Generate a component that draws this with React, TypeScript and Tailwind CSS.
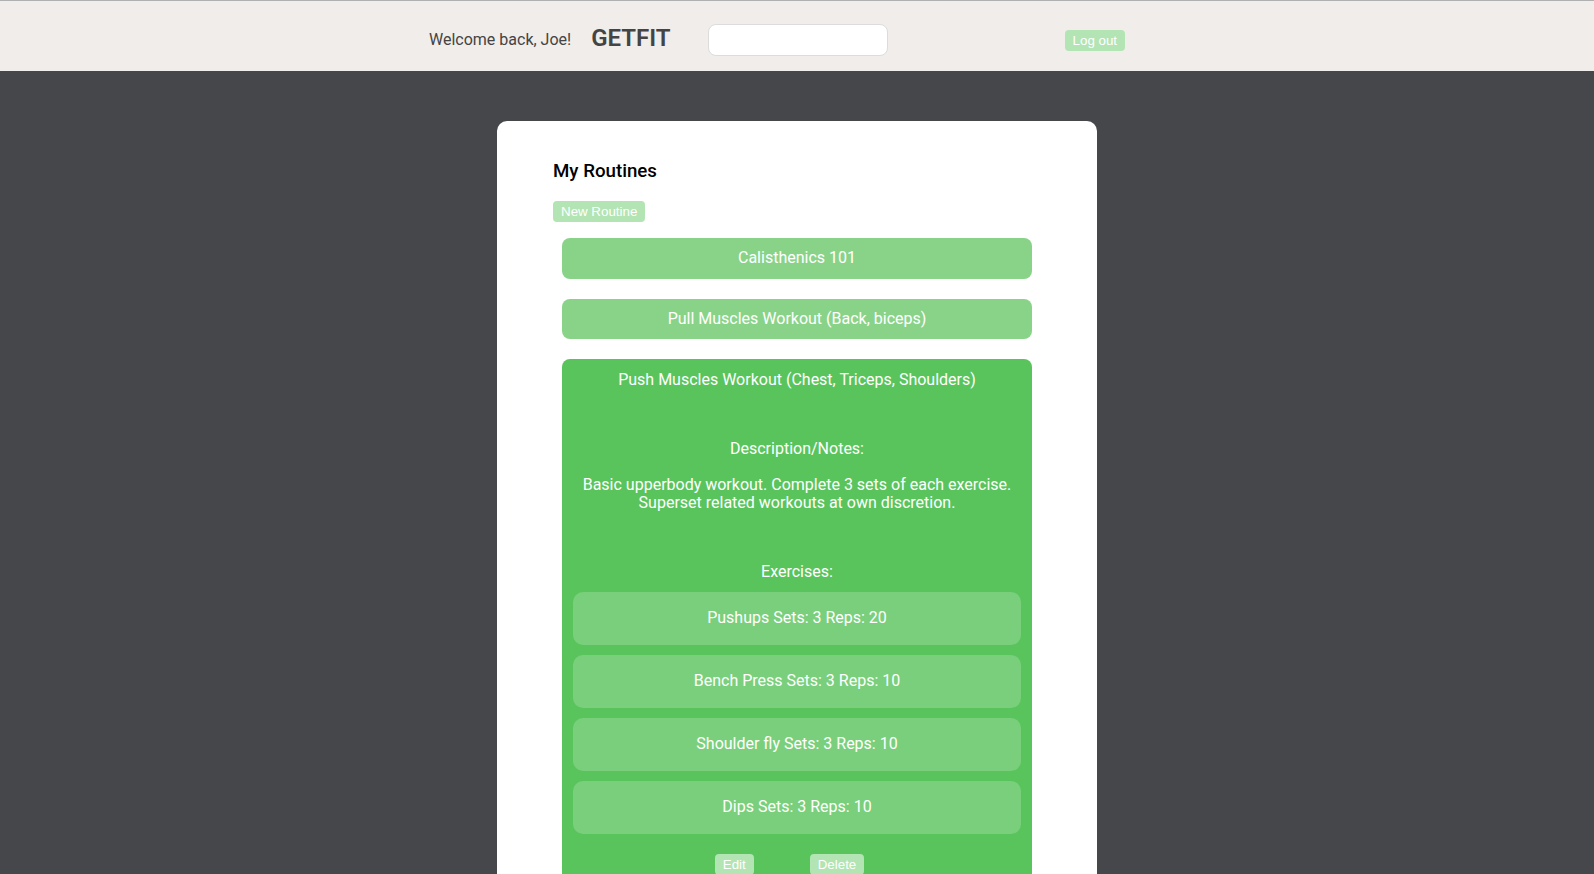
import React from "react"

const exercises = [
  "Pushups Sets: 3 Reps: 20",
  "Bench Press Sets: 3 Reps: 10",
  "Shoulder fly Sets: 3 Reps: 10",
  "Dips Sets: 3 Reps: 10",
]

function SmallButton({ children }: { children: React.ReactNode }) {
  return (
    <button className="rounded-[4px] border-2 border-[#b3e4b4] bg-[#b3e4b4] px-[6px] py-px font-['Liberation_Sans',Arial,sans-serif] text-[13.33px] leading-[15px] text-white">
      {children}
    </button>
  )
}

export default function App() {
  return (
    <div className="min-h-screen bg-[#46474b] font-['Roboto',sans-serif] leading-[1.17]">
      {/* Header */}
      <header className="flex h-[71px] items-center border-t border-[#b0b0b0] bg-[#f0edea] pl-[429px]">
        <span className="mt-[8px] text-[16px] text-[#444]">Welcome back, Joe!</span>
        <span className="ml-[20px] mt-[4px] text-[24px] font-semibold text-[#444]">GETFIT</span>
        <input className="ml-[37px] mt-[8px] h-[32px] w-[180px] rounded-[8px] border border-[#dcdcdc] bg-white" />
        <div className="ml-[177px] mt-[8px] flex">
          <SmallButton>Log out</SmallButton>
        </div>
      </header>

      {/* Card */}
      <main className="flex justify-center pt-[50px]">
        <div className="w-[600px] rounded-[10px] bg-white pb-10 pt-[40px]">
          <h2 className="pl-[56px] text-[18.72px] font-medium text-black">My Routines</h2>
          <div className="mt-[18px] flex pl-[56px]">
            <SmallButton>New Routine</SmallButton>
          </div>

          <div className="mt-[16px] flex flex-col gap-[20px] px-[65px]">
            <div className="rounded-[8px] bg-[#89d389] p-[11px] text-center text-[16px] text-white">
              Calisthenics 101
            </div>
            <div className="rounded-[8px] bg-[#89d389] p-[11px] text-center text-[16px] text-white">
              Pull Muscles Workout (Back, biceps)
            </div>
            <div className="rounded-[8px] bg-[#59c45c] px-[11px] pt-[12px] pb-[11px] text-center text-[16px] text-white">
              <div>Push Muscles Workout (Chest, Triceps, Shoulders)</div>
              <div className="mt-[50px]">Description/Notes:</div>
              <p className="mt-[17px]">
                Basic upperbody workout. Complete 3 sets of each exercise.
                <br />
                Superset related workouts at own discretion.
              </p>
              <div className="mt-[50px]">Exercises:</div>
              <div className="mt-[10px] flex flex-col gap-[10px]">
                {exercises.map((e) => (
                  <div key={e} className="flex h-[53px] items-center justify-center rounded-[10px] bg-[#79cf7b]">
                    {e}
                  </div>
                ))}
              </div>
              <div className="mt-[20px] flex justify-center gap-[56px] pr-[15px]">
                <SmallButton>Edit</SmallButton>
                <SmallButton>Delete</SmallButton>
              </div>
            </div>
          </div>
        </div>
      </main>
    </div>
  )
}
